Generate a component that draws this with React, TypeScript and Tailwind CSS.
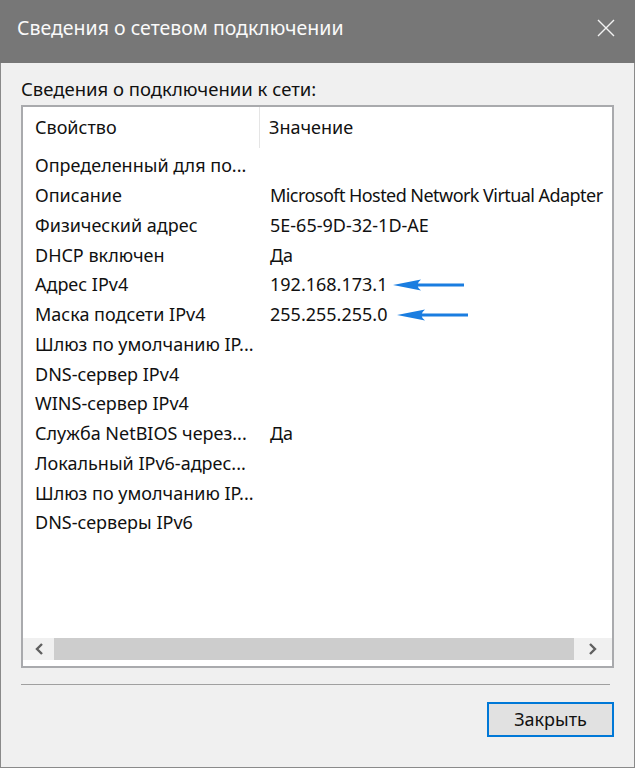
const rows: [string, string, number?][] = [
  ['Определенный для по...', ''],
  ['Описание', 'Microsoft Hosted Network Virtual Adapter'],
  ['Физический адрес', '5E-65-9D-32-1D-AE'],
  ['DHCP включен', 'Да'],
  ['Адрес IPv4', '192.168.173.1', 6],
  ['Маска подсети IPv4', '255.255.255.0', 10],
  ['Шлюз по умолчанию IP...', ''],
  ['DNS-сервер IPv4', ''],
  ['WINS-сервер IPv4', ''],
  ['Служба NetBIOS через...', 'Да'],
  ['Локальный IPv6-адрес...', ''],
  ['Шлюз по умолчанию IP...', ''],
  ['DNS-серверы IPv6', ''],
];

function Arrow({ offset }: { offset: number }) {
  return (
    <svg
      width="72"
      height="14"
      viewBox="0 0 72 14"
      className="shrink-0"
      style={{ marginLeft: offset }}
    >
      <path d="M20 5.6 H71 V8.4 H20 Z" fill="#1a7de0" />
      <path d="M0 7 L28 1.5 Q21 7 28 12.5 Z" fill="#1a7de0" />
    </svg>
  );
}

export default function App() {
  return (
    <div
      className="w-[635px] h-[768px] flex flex-col bg-[#f0f0f0] text-[18px] text-[#111]"
      style={{ fontFamily: '"Noto Sans", "Liberation Sans", Arial, sans-serif' }}
    >
      {/* Title bar */}
      <div className="h-[63px] shrink-0 bg-[#777777] flex items-center justify-between pl-[17px] pr-[20px] pb-[7px]">
        <span className="text-[19.5px] text-[#fafafa]">Сведения о сетевом подключении</span>
        <svg width="18" height="18" viewBox="0 0 18 18" className="text-[#f2f2f2]">
          <path d="M1 1 L17 17 M17 1 L1 17" stroke="currentColor" strokeWidth="1.4" fill="none" />
        </svg>
      </div>

      {/* Body */}
      <div className="flex-1 flex flex-col border-x border-b border-[#8a8a8a] pl-[20px] pr-[20px] pt-[14px] pb-[27px]">
        <div className="h-[24px] leading-[24px] text-[18.5px]">Сведения о подключении к сети:</div>

        {/* List */}
        <div className="mt-[4px] h-[563px] border-2 border-[#a9aaad] bg-white flex flex-col">
          <div className="flex h-[41px] items-center">
            <div className="w-[237px] pl-[12px] h-full flex items-center border-r border-[#e5e5e5]">Свойство</div>
            <div className="pl-[9px]">Значение</div>
          </div>
          <div className="flex-1 pt-[3px] overflow-hidden">
            {rows.map(([name, value, arrow], i) => (
              <div key={i} className="flex h-[29.75px] items-center whitespace-nowrap">
                <div className="w-[236px] pl-[12px] shrink-0">{name}</div>
                <div className="pl-[11px] flex items-center">
                  <span className={value.length > 30 ? 'tracking-[-0.55px]' : ''}>{value}</span>
                  {arrow !== undefined && <Arrow offset={arrow} />}
                </div>
              </div>
            ))}
          </div>
          {/* Horizontal scrollbar */}
          <div className="h-[22px] shrink-0 flex items-center bg-[#f0f0f0] mb-[6px]">
            <div className="w-[31px] h-full flex items-center justify-center">
              <svg width="10" height="12" viewBox="0 0 10 12">
                <path d="M8 1 L3 6 L8 11" stroke="#606060" strokeWidth="2.4" fill="none" />
              </svg>
            </div>
            <div className="flex-1 h-full bg-[#cdcdcd]" />
            <div className="w-[38px] h-full flex items-center justify-center">
              <svg width="10" height="12" viewBox="0 0 10 12">
                <path d="M2 1 L7 6 L2 11" stroke="#606060" strokeWidth="2.4" fill="none" />
              </svg>
            </div>
          </div>
        </div>

        <div className="mt-[16px] h-px bg-[#a0a0a0] mr-[4px]" />

        <div className="flex justify-end mt-[17px]">
          <button
            type="button"
            className="w-[127px] h-[35px] border-2 border-[#0078d7] bg-[#e1e1e1] text-[18px] text-[#111]"
          >
            Закрыть
          </button>
        </div>
      </div>
    </div>
  );
}
